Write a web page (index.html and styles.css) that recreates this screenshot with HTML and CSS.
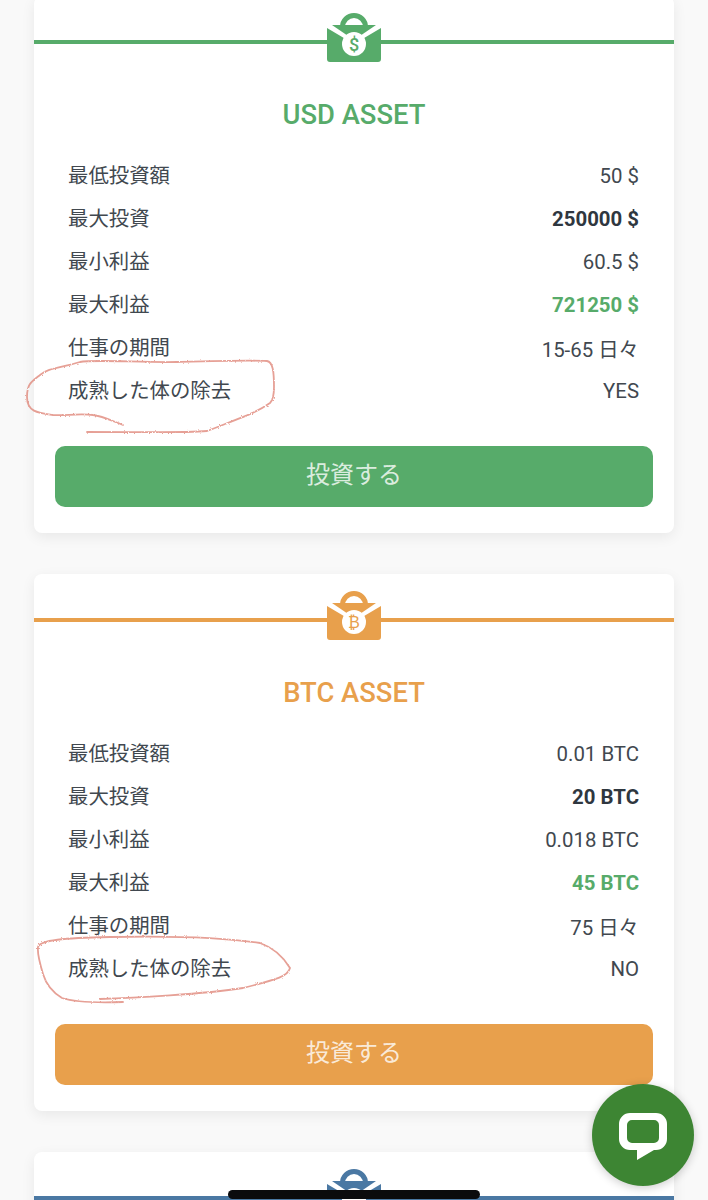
FILE: index.html
```html
<!DOCTYPE html>
<html lang="ja">
<head>
    <meta charset="UTF-8">
    <meta name="viewport" content="width=device-width, initial-scale=1.0">
    <title>Assets</title>
    <link rel="stylesheet" href="styles.css">
</head>
<body>
    <main class="plans">
        <section class="card card-green">
            <div class="card-top">
                <span class="card-line"></span>
                <svg class="bag" viewBox="0 0 54 49">
                    <path class="bag-fill" d="M13 14a14 14 0 0 1 28 0h-5a9 9 0 0 0-18 0z"/>
                    <path class="bag-fill" d="M5 12h44L27 27z"/>
                    <path class="bag-fill" d="M0 15l27 16 27-16v31a3 3 0 0 1-3 3H3a3 3 0 0 1-3-3z"/>
                    <circle class="bag-hole" cx="27" cy="31" r="12"/>
                    <text class="bag-sign" x="27" y="37.500">$</text>
                </svg>
                <span class="card-line"></span>
            </div>
            <h2 class="card-title">USD ASSET</h2>
            <ul class="rows">
                <li class="row"><span class="label">最低投資額</span><span>50 $</span></li>
                <li class="row"><span class="label">最大投資</span><b>250000 $</b></li>
                <li class="row"><span class="label">最小利益</span><span>60.5 $</span></li>
                <li class="row"><span class="label">最大利益</span><b class="profit">721250 $</b></li>
                <li class="row"><span class="label">仕事の期間</span><span>15-65 日々</span></li>
                <li class="row"><span class="label">成熟した体の除去</span><span>YES</span></li>
            </ul>
            <button class="invest">投資する</button>
            <svg class="scribble" viewBox="0 0 640 537">
                <defs>
                    <filter id="pencil" x="-10%" y="-10%" width="120%" height="120%">
                        <feTurbulence type="fractalNoise" baseFrequency="0.7" numOctaves="2" seed="4"/>
                        <feDisplacementMap in="SourceGraphic" scale="2.500"/>
                    </filter>
                </defs>
                <path d="M89 429C76 424 68 420 59 419C45 417 30 420 19 419C4 417-7 416-7 401C-7 388-3 386 6 379C14 372 26 372 46 366C60 363 110 367 143 366C180 365 215 364 233 365C239 366 240 376 240 391C240 400 238 405 236 407C222 417 209 421 173 435C150 437 110 436 53 436"/>
            </svg>
        </section>

        <section class="card card-orange">
            <div class="card-top">
                <span class="card-line"></span>
                <svg class="bag" viewBox="0 0 54 49">
                    <path class="bag-fill" d="M13 14a14 14 0 0 1 28 0h-5a9 9 0 0 0-18 0z"/>
                    <path class="bag-fill" d="M5 12h44L27 27z"/>
                    <path class="bag-fill" d="M0 15l27 16 27-16v31a3 3 0 0 1-3 3H3a3 3 0 0 1-3-3z"/>
                    <circle class="bag-hole" cx="27" cy="31" r="12"/>
                    <text class="bag-sign bag-sign-btc" x="27" y="37">₿</text>
                </svg>
                <span class="card-line"></span>
            </div>
            <h2 class="card-title">BTC ASSET</h2>
            <ul class="rows">
                <li class="row"><span class="label">最低投資額</span><span>0.01 BTC</span></li>
                <li class="row"><span class="label">最大投資</span><b>20 BTC</b></li>
                <li class="row"><span class="label">最小利益</span><span>0.018 BTC</span></li>
                <li class="row"><span class="label">最大利益</span><b class="profit">45 BTC</b></li>
                <li class="row"><span class="label">仕事の期間</span><span>75 日々</span></li>
                <li class="row"><span class="label">成熟した体の除去</span><span>NO</span></li>
            </ul>
            <button class="invest">投資する</button>
            <svg class="scribble" viewBox="0 0 640 537">
                <path d="M89 428C60 429 40 428 28 424C18 418 12 410 9 400C6 390 3 380 4 373C6 366 30 364 76 363C120 362 180 362 226 369C240 374 250 384 256 394C254 402 245 405 209 414C170 420 100 424 66 425"/>
            </svg>
        </section>

        <section class="card card-blue">
            <div class="card-top">
                <span class="card-line"></span>
                <svg class="bag" viewBox="0 0 54 49">
                    <path class="bag-fill" d="M13 14a14 14 0 0 1 28 0h-5a9 9 0 0 0-18 0z"/>
                    <path class="bag-fill" d="M5 12h44L27 27z"/>
                    <path class="bag-fill" d="M0 15l27 16 27-16v31a3 3 0 0 1-3 3H3a3 3 0 0 1-3-3z"/>
                    <circle class="bag-hole" cx="27" cy="31" r="12"/>
                </svg>
                <span class="card-line"></span>
            </div>
        </section>
    </main>

    <a class="chat" href="#">
        <svg class="chat-icon" viewBox="0 -2 48 48">
            <path fill-rule="evenodd" d="M11 0h26a11 11 0 0 1 11 11v15a11 11 0 0 1-11 11h-2l-17 10v-10h-7a11 11 0 0 1-11-11v-15a11 11 0 0 1 11-11zM13 7a5 5 0 0 0-5 5v13a5 5 0 0 0 5 5h22a5 5 0 0 0 5-5v-13a5 5 0 0 0-5-5z"/>
        </svg>
    </a>
    <div class="home-bar"></div>
</body>
</html>
```

FILE: styles.css
```css
html, body {
    height: 1200px;
    overflow: hidden;
}
body {
    margin: 0;
    background-color: #f9f9f9;
    font-family: Roboto, "Noto Sans CJK JP", sans-serif;
    color: #41484f;
}
.plans {
    display: flex;
    flex-direction: column;
    gap: 41px;
    margin: -4px 34px 0;
}
.card {
    position: relative;
    flex: none;
    height: 537px;
    box-sizing: border-box;
    padding-bottom: 26px;
    background-color: white;
    border-radius: 8px;
    box-shadow: 0 4px 14px rgba(0, 0, 0, 0.07);
}
.card-green { --accent: #57ab6a; }
.card-orange { --accent: #e8a04c; }
.card-blue { --accent: #4a78a3; }

.card-top {
    display: flex;
    align-items: flex-start;
    padding-top: 17px;
}
.card-line {
    flex: 1;
    height: 4px;
    margin-top: 27px;
    background-color: var(--accent);
}
.bag {
    flex: none;
    width: 54px;
    height: 49px;
}
.bag-fill { fill: var(--accent); }
.bag-hole { fill: white; }
.bag-sign {
    fill: var(--accent);
    font-family: Roboto, "DejaVu Sans", sans-serif;
    font-size: 18px;
    font-weight: 500;
    text-anchor: middle;
}
.bag-sign-btc {
    font-size: 16px;
    font-weight: 400;
}
.card-title {
    margin: 36px 0 0;
    text-align: center;
    font-size: 27.4px;
    font-weight: 500;
    line-height: 34px;
    color: var(--accent);
}
.rows {
    list-style: none;
    margin: 22px 0 0;
    padding: 0 35px 0 34px;
}
.row {
    display: flex;
    justify-content: space-between;
    align-items: center;
    height: 43px;
    font-size: 20.4px;
}
.row .label {
    margin-bottom: 3px;
}
.row b {
    font-weight: 700;
    color: #2f373f;
}
.row b.profit {
    color: #57ab6a;
}
.invest {
    display: block;
    width: 598px;
    height: 61px;
    margin: 34px auto 0;
    padding: 0 0 8px;
    border: none;
    border-radius: 10px;
    background-color: var(--accent);
    color: rgba(255, 255, 255, 0.8);
    font-family: inherit;
    font-size: 24px;
}
.scribble {
    position: absolute;
    top: 0;
    left: 0;
    width: 640px;
    height: 537px;
    overflow: visible;
    pointer-events: none;
}
.scribble path {
    fill: none;
    stroke: #e0897c;
    stroke-width: 1.8;
    stroke-linecap: round;
    opacity: 0.8;
    filter: url(#pencil);
}
.chat {
    position: fixed;
    left: 592px;
    top: 1084px;
    display: flex;
    align-items: center;
    justify-content: center;
    width: 102px;
    height: 102px;
    border-radius: 50%;
    background-color: #3d8533;
    box-shadow: 0 2px 10px rgba(0, 0, 0, 0.2);
}
.chat-icon {
    width: 48px;
    height: 48px;
    overflow: visible;
    fill: white;
}
.home-bar {
    position: fixed;
    left: 228px;
    top: 1190px;
    width: 252px;
    height: 9px;
    border-radius: 5px;
    background-color: #0b0b0d;
}
```
